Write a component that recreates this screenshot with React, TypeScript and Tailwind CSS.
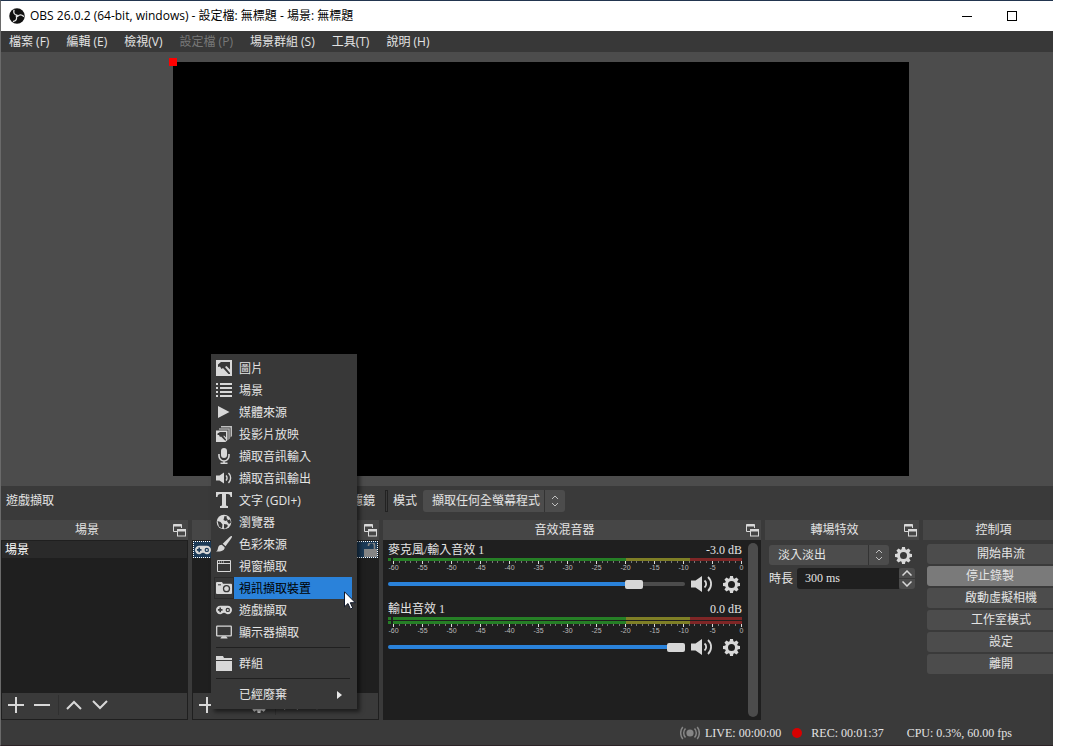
import React from "react";

type Kids = { children?: React.ReactNode };

function Glyph({ children, className = "size-4" }: Kids & { className?: string }) {
  return (
    <svg viewBox="0 0 16 16" className={`${className} block shrink-0 fill-[#d8d8d8]`} aria-hidden="true">
      {children}
    </svg>
  );
}

function ObsLogo() {
  return (
    <svg viewBox="0 0 32 32" className="size-4 shrink-0" aria-hidden="true">
      <circle cx="16" cy="16" r="15.5" fill="#111" />
      {["rotate(0 16 16)", "rotate(120 16 16)", "rotate(240 16 16)"].map((turn) => (
        <path
          key={turn}
          transform={turn}
          d="M10 4.5C8.500 9.500 10.500 13.500 16 14.500"
          fill="none"
          stroke="#e8e8e8"
          strokeWidth="2.600"
          strokeLinecap="round"
        />
      ))}
      <circle cx="16" cy="16" r="2.200" fill="#e8e8e8" />
    </svg>
  );
}

function Gear({ className = "size-[17px]" }: { className?: string }) {
  return (
    <Glyph className={className}>
      {[0, 45, 90, 135].map((a) => (
        <path key={a} transform={`rotate(${a} 8 8)`} d="M6.600 0h2.800l.5 3h-3.800zM6.600 16h2.800l.5-3h-3.800z" />
      ))}
      <path fillRule="evenodd" d="M8 1.900a6.100 6.100 0 1 0 0 12.200a6.100 6.100 0 1 0 0-12.200zM8 4.700a3.300 3.300 0 1 1 0 6.600a3.300 3.300 0 1 1 0-6.600z" />
    </Glyph>
  );
}

function Speaker() {
  return (
    <svg viewBox="0 0 22 16" className="block h-4 w-[22px] fill-[#d8d8d8]" aria-hidden="true">
      <path d="M0 4.500h4.500L11 0v16L4.500 11.500H0z" />
      <path d="M13.500 4.500a4.500 4.500 0 0 1 0 7M17 1a9.500 9.500 0 0 1 0 14" fill="none" stroke="#d8d8d8" strokeWidth="1.800" />
    </svg>
  );
}

function FloatIcon() {
  return (
    <svg viewBox="0 0 13 13" className="block size-[13px]" fill="none" stroke="#d8d8d8" aria-hidden="true">
      <path d="M4 7.500H.5v-7h8V4" />
      <path d="M.5 1.500h8" strokeWidth="2" />
      <rect x="4.500" y="5.500" width="8" height="6.500" fill="#464646" />
      <path d="M4.500 6.500h8" strokeWidth="2" />
    </svg>
  );
}

function Gamepad() {
  return (
    <Glyph>
      <path
        fillRule="evenodd"
        d="M4.200 3.800h7.600a4.200 4.200 0 0 1 0 8.400c-1.600 0-2.200-1.400-3.800-1.400s-2.200 1.400-3.800 1.400a4.200 4.200 0 0 1 0-8.400zM3.400 5.600v1.500H1.900v1.600h1.500v1.500H5V8.700h1.500V7.100H5V5.600zM11.800 5.700a2.200 2.200 0 1 0 0 4.400a2.200 2.200 0 1 0 0-4.400z"
      />
      <circle cx="11.800" cy="7.900" r="1" />
    </Glyph>
  );
}

const sourceTypes: { label: string; icon: React.ReactNode; active?: boolean }[] = [
  {
    label: "圖片",
    icon: (
      <Glyph>
        <path d="M0 0h16v16H0z" />
        <path d="M2 4.500L5 2h9v7.500L10.500 6 9 7l5 6v1h-1.500L7 8 5.500 9 4 6.500 2 7z" fill="#383838" />
      </Glyph>
    ),
  },
  {
    label: "場景",
    icon: (
      <Glyph>
        <path d="M0 1h2v2H0zM4 1h12v2H4zM0 5h2v2H0zM4 5h12v2H4zM0 9h2v2H0zM4 9h12v2H4zM0 13h2v2H0zM4 13h12v2H4z" />
      </Glyph>
    ),
  },
  { label: "媒體來源", icon: <Glyph><path d="M2 2l11.500 6L2 14z" /></Glyph> },
  {
    label: "投影片放映",
    icon: (
      <Glyph>
        <path d="M5 0h11v10l-1.500 1.500V1.500H5z" opacity=".85" />
        <path d="M3 2.200h10.800v10.300l-1.500 1.500V3.700H3z" opacity=".7" />
        <path d="M0 4.500h11.500V14l-2 2H0z" />
        <path d="M1.500 7.500L4 6h6v5.500L8 9.500l-.7.500 2.700 3.500v1H9l-4-4-1 .5L3 9H1.500z" fill="#383838" />
      </Glyph>
    ),
  },
  {
    label: "擷取音訊輸入",
    icon: (
      <Glyph>
        <rect x="5" y="0" width="6" height="10" rx="3" />
        <path d="M3 6v2a5 5 0 0 0 10 0V6M8 13v2M4.500 15.200h7" fill="none" stroke="#d8d8d8" strokeWidth="1.600" />
      </Glyph>
    ),
  },
  {
    label: "擷取音訊輸出",
    icon: (
      <Glyph>
        <path d="M0 5.500h3.500L8 2.500v11l-4.500-3H0z" />
        <path d="M10 5.500a3.500 3.500 0 0 1 0 5M12.500 3a7 7 0 0 1 0 10" fill="none" stroke="#d8d8d8" strokeWidth="1.400" />
      </Glyph>
    ),
  },
  {
    label: "文字 (GDI+)",
    icon: (
      <Glyph>
        <path d="M0 0h16v5h-1.500c0-2-1-3-3-3H10v10.500c0 1.200.5 1.500 2 1.500v2H4v-2c1.500 0 2-.3 2-1.500V2H4.500c-2 0-3 1-3 3H0z" />
      </Glyph>
    ),
  },
  {
    label: "瀏覽器",
    icon: (
      <Glyph>
        <circle cx="8" cy="8" r="7.300" />
        <path d="M8.500 2l2.500.5-.5 1.500L12 5.500 9.500 7 7.500 6zM10.500 6.500l3.500-1 1 3-2 1.500zM1.500 7l3 1 2 2.500-.5 4-3-2z" fill="#383838" />
        <path d="M8 10l3 .5 1 1.500-2.500 2.500H8z" fill="#383838" />
      </Glyph>
    ),
  },
  {
    label: "色彩來源",
    icon: (
      <Glyph>
        <path d="M15.800 0c.5.500 0 1.500-.8 2.700L9.500 10.300 6.700 7.700 13.500 1.200c1-.9 1.900-1.600 2.300-1.200z" />
        <path d="M5.800 8.700l2.800 2.600c.3 2.700-2.500 4.700-8.600 4.200 2-1 1.500-2.500 2.300-4.500.6-1.500 2-2.300 3.500-2.300z" />
      </Glyph>
    ),
  },
  {
    label: "視窗擷取",
    icon: (
      <Glyph>
        <path d="M1.500 2.500h13v11h-13z" fill="none" stroke="#d8d8d8" />
        <path d="M1 5h14v1H1zM3 3.500h1v1H3zM5 3.500h1v1H5zM7 3.500h1v1H7z" />
      </Glyph>
    ),
  },
  {
    label: "視訊擷取裝置",
    active: true,
    icon: (
      <Glyph>
        <path d="M1 2h5l1 1.700h8a1 1 0 0 1 1 1V13a1 1 0 0 1-1 1H1a1 1 0 0 1-1-1V3a1 1 0 0 1 1-1z" />
        <circle cx="10.500" cy="8.700" r="3" fill="none" stroke="#383838" strokeWidth="1.300" />
        <path d="M2 4.300h3v1H2z" fill="#383838" />
      </Glyph>
    ),
  },
  { label: "遊戲擷取", icon: <Gamepad /> },
  {
    label: "顯示器擷取",
    icon: (
      <Glyph>
        <rect x=".7" y="2.200" width="14.600" height="9.600" rx=".6" fill="none" stroke="#d8d8d8" strokeWidth="1.300" />
        <path d="M6 12.300h4l1.500 1.700v.6h-7V14z" />
      </Glyph>
    ),
  },
];

function MenuRow({ label, icon, active, submenu }: { label: string; icon?: React.ReactNode; active?: boolean; submenu?: boolean }) {
  return (
    <button role="menuitem" className="flex h-[22px] w-full items-stretch text-left">
      <span className={`flex w-5 items-center justify-center ${active ? "border border-[#2b2b2b]" : ""}`}>{icon}</span>
      <span className={`flex flex-1 items-center pt-[2px] pl-[5px] ${active ? "bg-[#2a82da] text-black" : ""}`}>
        {label}
        {submenu && (
          <svg viewBox="0 0 5 8" className="mr-[10px] ml-auto h-2 w-[5px] fill-[#e8e8e8]" aria-hidden="true">
            <path d="M0 0l5 4-5 4z" />
          </svg>
        )}
      </span>
    </button>
  );
}

function MenuRule() {
  return (
    <div role="separator" className="flex h-[9px] items-center px-[2px]">
      <div className="h-px w-full bg-[#202020]" />
    </div>
  );
}

function SourceMenu() {
  return (
    <div
      role="menu"
      className="absolute top-[354px] left-[211px] w-[146px] bg-[#383838] pt-[3px] pr-[5px] pb-1 pl-[3px] font-['Open_Sans','Noto_Sans_CJK_TC',sans-serif] shadow-[3px_3px_4px_rgba(0,0,0,0.5)]"
    >
      {sourceTypes.map((s) => (
        <MenuRow key={s.label} {...s} />
      ))}
      <MenuRule />
      <MenuRow
        label="群組"
        icon={
          <Glyph>
            <path d="M0 1h7l1 2h8v2H0zM0 6h16v10H0z" />
          </Glyph>
        }
      />
      <MenuRule />
      <MenuRow label="已經廢棄" submenu />
      <svg viewBox="0 0 12 19" className="absolute top-[237px] left-[133px] h-[19px] w-3" aria-hidden="true">
        <path d="M.5.800v15l3.500-3.300 2.400 5.500 2.300-1-2.400-5.300h5z" fill="#fff" stroke="#10182a" />
      </svg>
    </div>
  );
}

function Dock({ title, floating = true, className, children }: Kids & { title?: string; floating?: boolean; className: string }) {
  return (
    <section className={`flex flex-col ${className}`}>
      <header className="flex h-5 shrink-0 items-center bg-[#464646]">
        <h2 className="flex-1 text-center">{title}</h2>
        <button aria-label="浮動" className="w-[15px]">
          {floating && <FloatIcon />}
        </button>
      </header>
      {children}
    </section>
  );
}

function Stroke({ d, label }: { d: string; label: string }) {
  return (
    <button aria-label={label} className="flex size-[26px] items-center justify-center">
      <svg viewBox="0 0 16 16" className="size-4" fill="none" stroke="#d8d8d8" strokeWidth="2" aria-hidden="true">
        <path d={d} />
      </svg>
    </button>
  );
}

const PLUS = "M8 0v16M0 8h16";
const MINUS = "M0 8h16";
const UP = "M1 12l7-7 7 7";
const DOWN = "M1 4l7 7 7-7";

function ListFooter({ gear }: { gear?: boolean }) {
  return (
    <div className="flex h-7 items-center border border-[#1f1f1f] bg-[#3a3a3a] pb-[2px] pl-px">
      <Stroke d={PLUS} label="新增" />
      <Stroke d={MINUS} label="移除" />
      {gear && (
        <button aria-label="屬性" className="flex size-[26px] items-center justify-center">
          <Gear className="size-4" />
        </button>
      )}
      <div className="mr-[2px] ml-[3px] h-5 w-px bg-[#303030]" />
      <Stroke d={UP} label="上移" />
      <Stroke d={DOWN} label="下移" />
    </div>
  );
}

const dbMarks = [-60, -55, -50, -45, -40, -35, -30, -25, -20, -15, -10, -5, 0];
const ticks = Array.from({ length: 61 }, (_, i) => i);

function MeterBar() {
  return (
    <div className="flex h-[3px] gap-[2px]">
      <div className="w-[3px] bg-[#267f26]" />
      <div className="grid flex-1 grid-cols-[40fr_11fr_9fr]">
        <div className="bg-[#267f26]" />
        <div className="bg-[#7f7f26]" />
        <div className="bg-[#7f2626]" />
      </div>
    </div>
  );
}

function Channel({ name, level, bars, value, fill }: { name: string; level: string; bars: number; value: number; fill: string }) {
  return (
    <div>
      <div className="flex h-[17px] items-center justify-between">
        <span>{name}</span>
        <span>{level}</span>
      </div>
      <div className="flex flex-col gap-px">
        {Array.from({ length: bars }, (_, i) => (
          <MeterBar key={i} />
        ))}
      </div>
      <div className="h-[10px] pl-[5px]">
        <div className="flex h-[3px] justify-between">
          {ticks.map((t) => (
            <i key={t} className={t % 5 ? "h-[2px] w-px bg-[#777]" : "h-[3px] w-px bg-[#ddd]"} />
          ))}
        </div>
        <div className="flex justify-between font-['Liberation_Sans',sans-serif] text-[7px] leading-[7px] text-[#bbb]">
          {dbMarks.map((m) => (
            <span key={m} className="flex w-px justify-center whitespace-nowrap">
              {m}
            </span>
          ))}
        </div>
      </div>
      <div className="mt-1 flex h-[18px] items-center pr-[2px]">
        <input
          type="range"
          aria-label={name}
          defaultValue={value}
          className={`h-1 min-w-0 flex-1 appearance-none rounded-full [&::-webkit-slider-thumb]:h-[9px] [&::-webkit-slider-thumb]:w-[18px] [&::-webkit-slider-thumb]:appearance-none [&::-webkit-slider-thumb]:rounded-[2px] [&::-webkit-slider-thumb]:bg-[#d6d6d6] ${fill}`}
        />
        <button aria-label="靜音" className="ml-[6px]">
          <Speaker />
        </button>
        <button aria-label="音效設定" className="ml-[10px]">
          <Gear />
        </button>
      </div>
    </div>
  );
}

function Combo({ label, value, className }: { label: string; value: string; className: string }) {
  return (
    <div className={`relative ${className}`}>
      <select aria-label={label} className="size-full appearance-none rounded-[3px] bg-[#4c4c4c] pl-[9px] text-[#e4e4e4]">
        <option>{value}</option>
      </select>
      <div className="pointer-events-none absolute inset-y-0 right-0 flex w-[21px] items-center justify-center border-l border-[#333]">
        <svg viewBox="0 0 8 12" className="h-3 w-2" fill="none" stroke="#c0c0c0" aria-hidden="true">
          <path d="M1 4l3-3 3 3M1 8l3 3 3-3" />
        </svg>
      </div>
    </div>
  );
}

const menus = ["檔案 (F)", "編輯 (E)", "檢視(V)", "設定檔 (P)", "場景群組 (S)", "工具(T)", "說明 (H)"];
const controls = ["開始串流", "停止錄製", "啟動虛擬相機", "工作室模式", "設定", "離開"];

export default function App() {
  return (
    <div className="relative flex min-h-screen flex-col bg-white pr-[29px] text-[12px] leading-4 text-[#e4e4e4]">
      <div className="flex flex-1 flex-col overflow-hidden border-t border-b border-l border-t-[#22354f] border-b-[#2c2326] border-l-[#6a6a6a] bg-[#3a3a3a] font-['Liberation_Serif','Noto_Sans_CJK_TC',serif]">
        <header className="flex h-[30px] items-center bg-white pl-2 font-['Open_Sans','Noto_Sans_CJK_TC',sans-serif] text-black">
          <ObsLogo />
          <h1 className="ml-[5px] flex-1 whitespace-nowrap">OBS 26.0.2 (64-bit, windows) - 設定檔: 無標題 - 場景: 無標題</h1>
          <button aria-label="最小化" className="flex w-[45px] justify-center">
            <span className="h-px w-[10px] bg-black" />
          </button>
          <button aria-label="最大化" className="flex w-[45px] justify-center">
            <span className="size-[10px] border border-black" />
          </button>
          <div className="w-[19px]" />
        </header>

        <nav className="flex h-[21px] items-center gap-[17px] bg-[#383838] pt-px pl-2 font-['Open_Sans','Noto_Sans_CJK_TC',sans-serif]">
          {menus.map((m) => (
            <button key={m} disabled={m.startsWith("設定檔")} className="whitespace-nowrap disabled:text-[#777]">
              {m}
            </button>
          ))}
        </nav>

        <main className="-mr-[28px] flex flex-1 items-center justify-center bg-[#4c4c4c] py-[10px]">
          <div className="relative aspect-video w-[68.2%] bg-black">
            <div className="absolute -top-1 -left-1 size-2 bg-[#f00]" />
          </div>
        </main>

        <div className="flex h-[34px] items-center pb-1 pl-[5px]">
          <span className="w-[321px]">遊戲擷取</span>
          <button className="w-12 text-right">濾鏡</button>
          <div className="mr-[5px] ml-[10px] h-[22px] w-[3px] border border-[#222]" />
          <span>模式</span>
          <Combo label="模式" value="擷取任何全螢幕程式" className="ml-[6px] h-[22px] w-[142px]" />
        </div>

        <div className="-mr-[26px] flex h-[200px] gap-1">
          <Dock title="場景" className="w-[187px]">
            <ul className="flex-1 border border-b-0 border-[#1f1f1f] bg-[#1f1f1f]">
              <li className="flex h-[17px] items-center bg-[#2a2a2a] pl-[3px] text-white">場景</li>
            </ul>
            <ListFooter />
          </Dock>

          <Dock className="w-[187px]">
            <ul className="flex-1 bg-[#1f1f1f] p-px">
              <li className="flex h-[17px] items-center justify-between border border-dotted border-white bg-[#1b3a57] pl-px">
                <Gamepad />
                <svg viewBox="0 0 13 14" className="h-[14px] w-[13px] fill-[#858585]" aria-hidden="true">
                  <path d="M0 6h13v8H0z" />
                  <path d="M4.500 3V2.500a3 3 0 0 1 6 0V6" fill="none" stroke="#858585" strokeWidth="1.600" />
                </svg>
              </li>
            </ul>
            <ListFooter gear />
          </Dock>

          <Dock title="音效混音器" className="min-w-0 flex-1">
            <div className="flex flex-1 gap-[6px] bg-[#1f1f1f] pt-px pr-[3px] pl-[5px]">
              <div className="flex min-w-0 flex-1 flex-col gap-[7px]">
                <Channel
                  name="麥克風/輸入音效 1"
                  level="-3.0 dB"
                  bars={1}
                  value={85}
                  fill="bg-[linear-gradient(90deg,#2a82da_81%,#4c4c4c_81%)]"
                />
                <Channel
                  name="輸出音效 1"
                  level="0.0 dB"
                  bars={2}
                  value={100}
                  fill="bg-[linear-gradient(90deg,#2a82da_96%,#4c4c4c_96%)]"
                />
              </div>
              <div className="mt-[2px] mb-[3px] w-[10px] rounded-full bg-[#4c4c4c]" />
            </div>
          </Dock>

          <Dock title="轉場特效" className="w-[154px]">
            <div className="flex flex-col gap-[3px] px-1 pt-[5px]">
              <div className="flex items-center">
                <Combo label="轉場特效" value="淡入淡出" className="h-5 w-[120px]" />
                <button aria-label="轉場設定" className="ml-[6px]">
                  <Gear />
                </button>
              </div>
              <div className="flex items-center">
                <label htmlFor="duration">時長</label>
                <input
                  id="duration"
                  defaultValue="300 ms"
                  className="ml-1 h-[21px] min-w-0 flex-1 rounded-l-[3px] bg-[#1f1f1f] pl-2"
                />
                <div className="flex w-4 flex-col gap-px">
                  <button aria-label="增加" className="flex h-[10px] items-center justify-center rounded-t-[3px] bg-[#4c4c4c]">
                    <svg viewBox="0 0 10 6" className="h-[6px] w-[10px]" fill="none" stroke="#d8d8d8" strokeWidth="1.500" aria-hidden="true">
                      <path d="M.5 5.500L5 1l4.500 4.500" />
                    </svg>
                  </button>
                  <button aria-label="減少" className="flex h-[10px] items-center justify-center rounded-b-[3px] bg-[#4c4c4c]">
                    <svg viewBox="0 0 10 6" className="h-[6px] w-[10px]" fill="none" stroke="#d8d8d8" strokeWidth="1.500" aria-hidden="true">
                      <path d="M.5.500L5 5l4.500-4.500" />
                    </svg>
                  </button>
                </div>
              </div>
            </div>
          </Dock>

          <Dock title="控制項" floating={false} className="w-[156px]">
            <div className="flex flex-col gap-[2px] px-1 pt-1">
              {controls.map((c) => (
                <button
                  key={c}
                  className={`h-5 rounded-[3px] ${c === "停止錄製" ? "mr-[22px] rounded-r-none bg-[#7a7a7a]" : "bg-[#4c4c4c]"}`}
                >
                  {c}
                </button>
              ))}
            </div>
          </Dock>
        </div>

        <footer className="flex h-[25px] items-center justify-end pr-[41px] whitespace-nowrap">
          <svg viewBox="0 0 20 14" className="mr-[5px] h-[14px] w-5" fill="none" stroke="#858585" strokeWidth="1.500" aria-hidden="true">
            <circle cx="10" cy="7" r="3.600" fill="#858585" stroke="none" />
            <path d="M5.500 2.500a6.500 6.500 0 0 0 0 9M14.500 2.500a6.500 6.500 0 0 1 0 9M2.800 1a9.500 9.500 0 0 0 0 12M17.200 1a9.500 9.500 0 0 1 0 12" />
          </svg>
          <span>LIVE: 00:00:00</span>
          <span className="mr-[9px] ml-[11px] size-[10px] rounded-full bg-[#d80000]" />
          <span>REC: 00:01:37</span>
          <span className="ml-[23px]">CPU: 0.3%, 60.00 fps</span>
        </footer>
      </div>

      <SourceMenu />
    </div>
  );
}
